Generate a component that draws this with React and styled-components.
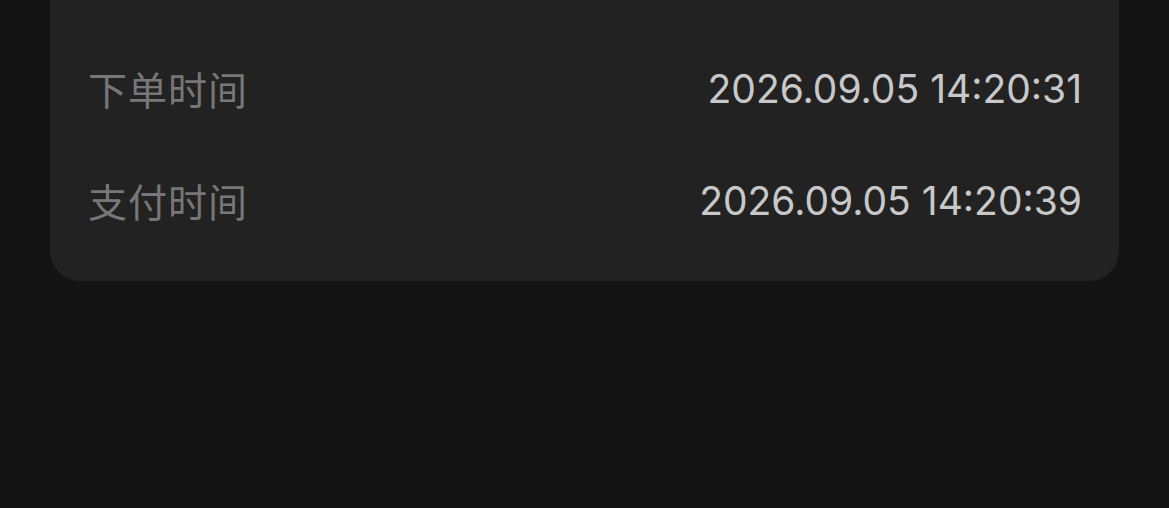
import React from "react";
import styled, { createGlobalStyle } from "styled-components";

const GlobalStyle = createGlobalStyle`
  html, body {
    margin: 0;
    padding: 0;
    background: #131313;
  }
  body {
    font-family: Inter, "Noto Sans CJK SC", sans-serif;
  }
`;

const rows = [
  { label: "下单时间", value: "2026.09.05 14:20:31" },
  { label: "支付时间", value: "2026.09.05 14:20:39" },
];

const App = () => {
  return (
    <Page>
      <GlobalStyle />
      <Card>
        {rows.map((row) => (
          <Row key={row.label}>
            <Label>{row.label}</Label>
            <Value>{row.value}</Value>
          </Row>
        ))}
      </Card>
    </Page>
  );
};

export default App;

const Page = styled.div`
  width: 1169px;
  height: 508px;
  padding: 0 50px;
  box-sizing: border-box;
  background: #131313;
  overflow: hidden;
`;

const Card = styled.div`
  background: #222222;
  border-radius: 0 0 30px 30px;
  padding: 32px 37px 25px 38px;
`;

const Row = styled.div`
  display: flex;
  align-items: center;
  justify-content: space-between;
  height: 112px;
`;

const Label = styled.div`
  font-family: "Noto Sans CJK SC", sans-serif;
  font-size: 39px;
  color: #777777;
  letter-spacing: 1px;
`;

const Value = styled.div`
  font-family: Inter, sans-serif;
  font-size: 39px;
  color: #c8c8c8;
`;
